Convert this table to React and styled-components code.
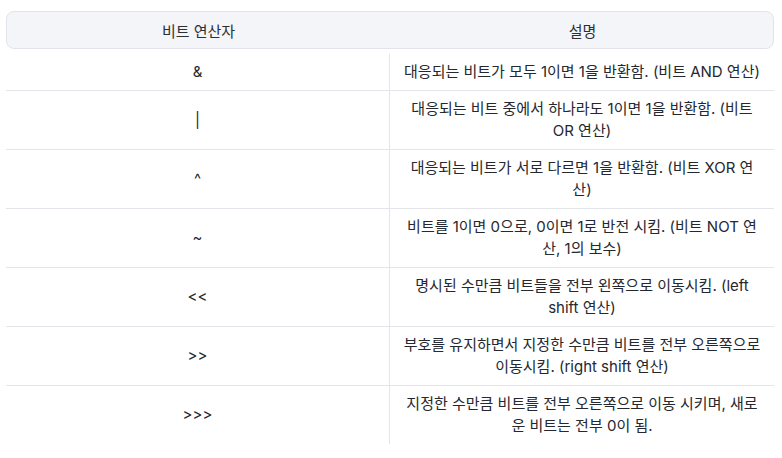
import React from "react";
import styled, { createGlobalStyle } from "styled-components";

const Global = createGlobalStyle`
  html, body { margin: 0; padding: 0; background: #ffffff; }
  body { font-family: "Inter", "Noto Sans CJK KR", sans-serif; }
`;

const Page = styled.div`
  padding: 11px 8px 0 6px;
  width: 768px;
`;

const Header = styled.div`
  display: grid;
  grid-template-columns: 383px 385px;
  height: 38px;
  box-sizing: border-box;
  background: #f4f5f9;
  border: 1px solid #e3e4eb;
  border-radius: 8px;
  margin-bottom: 5px;
`;

const HeadCell = styled.div`
  display: flex;
  align-items: center;
  justify-content: center;
  font-size: 15px;
  color: #2b2f36;
`;

const Body = styled.div`
  display: grid;
  grid-template-columns: 383px 385px;
`;

const Cell = styled.div`
  display: flex;
  align-items: center;
  justify-content: center;
  text-align: center;
  box-sizing: border-box;
  padding: 7px 13px;
  font-size: 15px;
  line-height: 22px;
  color: #25282e;
  border-bottom: ${(p) => (p.$last ? "none" : "1px solid #e4e5eb")};
  border-left: ${(p) => (p.$right ? "1px solid #e4e5eb" : "none")};
`;

const rows = [
  ["&", "대응되는 비트가 모두 1이면 1을 반환함. (비트 AND 연산)"],
  ["|", "대응되는 비트 중에서 하나라도 1이면 1을 반환함. (비트 OR 연산)"],
  ["^", "대응되는 비트가 서로 다르면 1을 반환함. (비트 XOR 연산)"],
  ["~", "비트를 1이면 0으로, 0이면 1로 반전 시킴. (비트 NOT 연산, 1의 보수)"],
  ["<<", "명시된 수만큼 비트들을 전부 왼쪽으로 이동시킴. (left shift 연산)"],
  [">>", "부호를 유지하면서 지정한 수만큼 비트를 전부 오른쪽으로 이동시킴. (right shift 연산)"],
  [">>>", "지정한 수만큼 비트를 전부 오른쪽으로 이동 시키며, 새로운 비트는 전부 0이 됨."],
];

export default function App() {
  return (
    <Page>
      <Global />
      <Header>
        <HeadCell>비트 연산자</HeadCell>
        <HeadCell>설명</HeadCell>
      </Header>
      <Body>
        {rows.map(([op, desc], i) => {
          const last = i === rows.length - 1;
          return (
            <React.Fragment key={i}>
              <Cell $last={last}>{op}</Cell>
              <Cell $last={last} $right>
                {desc}
              </Cell>
            </React.Fragment>
          );
        })}
      </Body>
    </Page>
  );
}
